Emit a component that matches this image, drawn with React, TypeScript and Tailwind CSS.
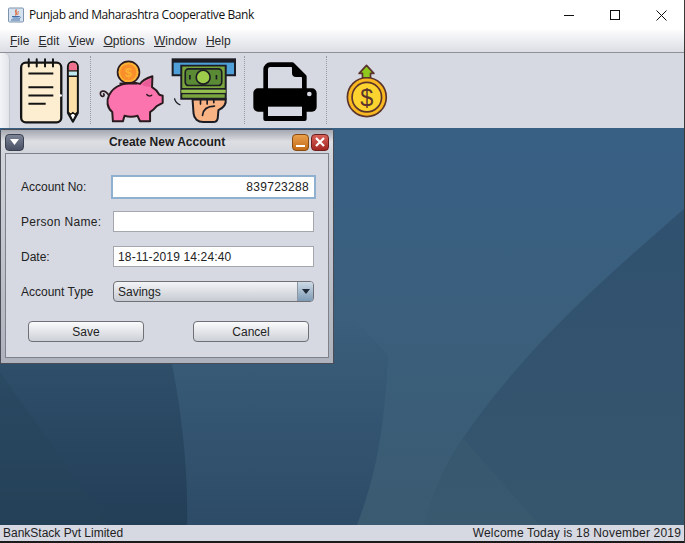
const sans = "font-['Liberation_Sans',Arial,sans-serif]";

const menus = ["File", "Edit", "View", "Options", "Window", "Help"];

const JavaIcon = () => (
  <svg width="16" height="16" viewBox="0 0 16 16" className="block">
    <rect x="0.5" y="1" width="15" height="14" rx="1" fill="#d5e2f0" stroke="#7f93ad" />
    <path d="M8.5 2.5C6 5 10 6 7.5 8.5" fill="none" stroke="#d9572b" strokeWidth="1.3" />
    <path d="M10.5 4C9 5.5 11 6 9.5 8" fill="none" stroke="#e0793f" strokeWidth="1" />
    <path d="M4 9.5h7M4.5 11h6M3 13h9" stroke="#3f6fa8" strokeWidth="1" />
    <path d="M11 9.5c2 0 2 2-.5 2" fill="none" stroke="#3f6fa8" strokeWidth="0.8" />
  </svg>
);

const WindowControls = () => (
  <div className="flex">
    <div className="w-[46px] h-[30px] flex items-center justify-center">
      <svg width="10" height="10" viewBox="0 0 10 10"><path d="M0 5.5h10" stroke="#111" /></svg>
    </div>
    <div className="w-[46px] h-[30px] flex items-center justify-center">
      <svg width="10" height="10" viewBox="0 0 10 10"><rect x="0.5" y="0.5" width="9" height="9" fill="none" stroke="#111" /></svg>
    </div>
    <div className="w-[46px] h-[30px] flex items-center justify-center">
      <svg width="11" height="11" viewBox="0 0 11 11"><path d="M0.5 0.5l10 10M10.5 0.5l-10 10" stroke="#111" /></svg>
    </div>
  </div>
);

const NotepadIcon = () => (
  <svg width="65" height="68" viewBox="50 15 195 205" className="block">
    <rect x="62" y="32" width="121" height="180" rx="14" fill="#fdeed2" stroke="#141414" strokeWidth="7" />
    <path d="M85 22v22M109 22v22M134 22v22M158 22v22" stroke="#141414" strokeWidth="6" strokeLinecap="round" />
    <path d="M84 65h75M84 106h75M84 131h75M84 156h52" stroke="#141414" strokeWidth="6" />
    <circle cx="181" cy="131" r="4" fill="#fff" />
    <path d="M203 44a15 15 0 0 1 30 0v140l-15 26-15-26z" fill="#fde0a8" stroke="#141414" strokeWidth="6" strokeLinejoin="round" />
    <path d="M206 44a12 12 0 0 1 24 0v12h-24z" fill="#ee6f8e" />
    <rect x="206" y="58" width="24" height="15" fill="#bfe8f2" />
    <path d="M204 57h28M204 73h28" stroke="#141414" strokeWidth="4" />
    <path d="M205 182l7 6 6-6 6 6 7-6-13 26z" fill="#fff" stroke="#141414" strokeWidth="4" strokeLinejoin="round" />
  </svg>
);

const PiggyIcon = () => (
  <svg width="68" height="67" viewBox="20 15 205 200" className="block">
    <path d="M56 130C44 110 26 116 31 128c4 8 14 4 9-3" fill="none" stroke="#2b1b1f" strokeWidth="5" strokeLinecap="round" />
    <circle cx="115" cy="60" r="33" fill="#fdb233" stroke="#2b1b1f" strokeWidth="5" />
    <path d="M115 36a24 24 0 0 1 0 48 24 24 0 0 1-14-44" fill="#f98f2b" />
    <text x="115" y="74" textAnchor="middle" fontSize="38" fontFamily="Liberation Sans" fontWeight="700" fill="#fdb233">$</text>
    <path d="M56 130C70 98 112 86 150 95C155 86 170 78 187 72L186 105C198 112 205 122 208 128L218 131L218 152L200 162C192 172 186 176 180 180L180 208L150 208L142 191C130 195 115 195 103 191L98 208L68 208L66 180C50 167 48 145 56 130Z" fill="#fb74ae" stroke="#2b1b1f" strokeWidth="6" strokeLinejoin="round" />
    <path d="M155 97c8-8 18-14 28-18l-1 24c-8 2-20 0-27-6z" fill="#e85c98" />
    <path d="M170 127c4 5 10 6 15 2" fill="none" stroke="#2b1b1f" strokeWidth="4" strokeLinecap="round" />
    <path d="M88 94h52" stroke="#2b1b1f" strokeWidth="6" />
  </svg>
);

const AtmIcon = () => (
  <svg width="68" height="67" viewBox="235 15 205 200" className="block">
    <rect x="246" y="21" width="188" height="48" fill="#4f9fd8" stroke="#1c1c24" strokeWidth="6" />
    <rect x="246" y="21" width="188" height="10" fill="#1c1c24" />
    <path d="M272 40h134v100H272z" fill="#7aa53e" stroke="#1c1c24" strokeWidth="6" />
    <path d="M272 110h134M272 124h134" stroke="#1c1c24" strokeWidth="5" />
    <rect x="272" y="113" width="134" height="9" fill="#96c050" />
    <rect x="284" y="50" width="110" height="50" rx="10" fill="#5b8a35" stroke="#1c1c24" strokeWidth="5" />
    <circle cx="338" cy="75" r="21" fill="#9ccc4a" stroke="#1c1c24" strokeWidth="5" />
    <path d="M298 68v14M378 68v14" stroke="#1c1c24" strokeWidth="5" />
    <path d="M252 140c2 8 8 14 16 18" fill="none" stroke="#1c1c24" strokeWidth="4" strokeLinecap="round" />
    <path d="M306 142h100c2 14-8 26-22 32l-2 24c-1 8-6 12-14 12h-30c-16 0-28-10-29-26z" fill="#f7b383" stroke="#1c1c24" strokeWidth="6" strokeLinejoin="round" />
    <path d="M336 190c2-18 12-28 36-28M330 142v14M350 142v14M370 142v10" fill="none" stroke="#1c1c24" strokeWidth="5" strokeLinecap="round" />
  </svg>
);

const PrinterIcon = () => (
  <svg width="70" height="65" viewBox="30 20 210 195" className="block">
    <path d="M77 115V51a14 14 0 0 1 14-14h66l36 36v42" fill="#d6d9e2" stroke="#000" strokeWidth="14" strokeLinejoin="round" />
    <path d="M156 40v22a12 12 0 0 0 12 12h26z" fill="#000" />
    <path d="M54 108h162a14 14 0 0 1 14 14v42a14 14 0 0 1-14 14H54a14 14 0 0 1-14-14v-42a14 14 0 0 1 14-14z" fill="#000" />
    <path d="M70 150h130v50a6 6 0 0 1-6 6H76a6 6 0 0 1-6-6z" fill="#000" />
    <rect x="84" y="163" width="102" height="28" fill="#d6d9e2" />
    <circle cx="208" cy="125" r="7" fill="#d6d9e2" />
  </svg>
);

const CoinIcon = () => (
  <svg width="47" height="57" viewBox="310 30 140 170" className="block">
    <path d="M380 40l22 24h-10v14h-24V64h-10z" fill="#8ec91d" stroke="#5b342c" strokeWidth="5" strokeLinejoin="round" />
    <circle cx="381" cy="135" r="58" fill="#f9b81f" stroke="#5b342c" strokeWidth="5" />
    <circle cx="381" cy="135" r="44" fill="#fdd42f" stroke="#5b342c" strokeWidth="5" />
    <text x="381" y="160" textAnchor="middle" fontSize="70" fontFamily="Liberation Sans" fill="#5b342c">$</text>
  </svg>
);

const Wallpaper = () => (
  <svg className="absolute inset-0 block" width="685" height="397" viewBox="0 128 685 397">
    <defs>
      <linearGradient id="base" x1="0" y1="0" x2="0" y2="1">
        <stop offset="0" stopColor="#386085" />
        <stop offset="0.55" stopColor="#3b5f7b" />
        <stop offset="1" stopColor="#3a5a70" />
      </linearGradient>
      <linearGradient id="mid" gradientUnits="userSpaceOnUse" x1="0" y1="322" x2="0" y2="525">
        <stop offset="0" stopColor="#3a5e7b" />
        <stop offset="1" stopColor="#2d4b66" />
      </linearGradient>
      <linearGradient id="left" x1="0" y1="0" x2="0" y2="1">
        <stop offset="0" stopColor="#2f4f6a" />
        <stop offset="1" stopColor="#233e57" />
      </linearGradient>
      <linearGradient id="wedge" x1="0" y1="0" x2="0" y2="1">
        <stop offset="0" stopColor="#30516f" />
        <stop offset="1" stopColor="#36566d" />
      </linearGradient>
    </defs>
    <rect x="0" y="128" width="685" height="397" fill="url(#base)" />
    <path d="M357 322L388 355C385 420 378 470 357 525L0 525L0 322Z" fill="url(#mid)" />
    <path d="M170 355C184 420 188 480 187 525L0 525L0 355Z" fill="url(#left)" />
    <path d="M0 372L108 525L0 525Z" fill="#24455a" opacity="0.35" />
    <path d="M685 208C620 265 530 340 463 438C445 465 432 495 425 525L685 525Z" fill="url(#wedge)" />
    <path d="M463 438L540 525L425 525C432 495 445 465 463 438Z" fill="#3a5b70" opacity="0.5" />
  </svg>
);

const ToolSeparator = () => <div className="w-px h-[68px] mt-[3px] border-l border-dotted border-[#9a9ca3]" />;

const Field = ({ label, className, children }: { label: string; className: string; children: React.ReactNode }) => (
  <div className={`flex items-center ${className}`}>
    <span className="w-[92px] text-[12px] leading-none text-[#222]">{label}</span>
    {children}
  </div>
);

const ActionButton = ({ label }: { label: string }) => (
  <div className="w-[116px] h-[21px] flex items-center justify-center rounded-[4px] border border-[#6f7177] bg-gradient-to-b from-[#fbfbfc] to-[#cdd0d7] text-[12px] text-[#222]">
    {label}
  </div>
);

const CreateAccountFrame = () => (
  <div className="absolute left-0 top-[1px] w-[334px] h-[235px] flex flex-col rounded-t-[3px] border border-[#4a4d55] bg-gradient-to-b from-[#d6d8de] to-[#aeb2bc]">
    <div className="h-[23px] flex items-center px-[4px] pt-[1px] bg-gradient-to-b from-[#a5a8b1] via-[#dcdee3] to-[#d2d5dc]">
      <div className="w-[19px] h-[17px] flex items-center justify-center rounded-[4px] border border-[#3b4150] bg-gradient-to-b from-[#7c8496] to-[#4a5165]">
        <svg width="9" height="6" viewBox="0 0 9 6"><path d="M0 0h9L4.5 6z" fill="#fff" /></svg>
      </div>
      <span className="flex-1 text-center text-[12px] font-bold text-[#1c1c1c] pl-[18px]">Create New Account</span>
      <div className="flex gap-[2px]">
        <div className="w-[17px] h-[17px] flex items-end justify-center pb-[3px] rounded-[4px] border border-[#8a4b10] bg-gradient-to-b from-[#e9a04a] to-[#c36a12]">
          <div className="w-[9px] h-[2px] bg-white" />
        </div>
        <div className="w-[18px] h-[17px] flex items-center justify-center rounded-[4px] border border-[#6e1c1c] bg-gradient-to-b from-[#d8625a] to-[#a42420]">
          <svg width="10" height="10" viewBox="0 0 10 10"><path d="M1 1l8 8M9 1l-8 8" stroke="#fff" strokeWidth="2.2" /></svg>
        </div>
      </div>
    </div>
    <div className="mx-[4px] h-[205px] pl-[15px] border border-[#7e8189] bg-[#d6d9e2]">
      <Field label="Account No:" className="mt-[23px]">
        <div className="w-[201px] h-[20px] flex items-center justify-end pr-[5px] bg-white outline outline-2 outline-[#8fb0cf] text-[12px] tracking-[0.3px] text-[#222]">
          839723288
        </div>
      </Field>
      <Field label="Person Name:" className="mt-[14px] tracking-[0.3px]">
        <div className="w-[201px] h-[21px] bg-white border border-[#a4a7ae]" />
      </Field>
      <Field label="Date:" className="mt-[14px]">
        <div className="w-[201px] h-[21px] flex items-center pl-[4px] bg-white border border-[#a4a7ae] text-[12px] tracking-[0.15px] text-[#222]">
          18-11-2019 14:24:40
        </div>
      </Field>
      <Field label="Account Type" className="mt-[14px]">
        <div className="w-[201px] h-[21px] flex items-center rounded-[4px] border border-[#6f7177] bg-gradient-to-b from-[#f3f4f6] to-[#c7cbd2] overflow-hidden">
          <span className="flex-1 pl-[4px] text-[12px] text-[#222]">Savings</span>
          <div className="w-[16px] h-full flex items-center justify-center border-l border-[#8c96a3] bg-gradient-to-b from-[#cfdbe6] to-[#7e9bb5]">
            <svg width="8" height="5" viewBox="0 0 8 5"><path d="M0 0h8L4 5z" fill="#1f2a36" /></svg>
          </div>
        </div>
      </Field>
      <div className="flex mt-[19px] pl-[7px] gap-[49px]">
        <ActionButton label="Save" />
        <ActionButton label="Cancel" />
      </div>
    </div>
  </div>
);

export default function App() {
  return (
    <div className={`w-[685px] h-[543px] flex flex-col overflow-hidden bg-[#1c1c1c] border-r border-[#3a3a3a] ${sans}`}>
      <div className="h-[30px] shrink-0 flex items-center bg-white">
        <div className="ml-[8px]"><JavaIcon /></div>
        <span className="ml-[5px] flex-1 font-['Open_Sans',sans-serif] text-[12px] tracking-[-0.4px] text-[#111]">
          Punjab and Maharashtra Cooperative Bank
        </span>
        <WindowControls />
      </div>

      <div className="h-[23px] shrink-0 flex items-center gap-[9.2px] pl-[10px] border-b border-[#8f9198] bg-gradient-to-b from-[#fcfcfd] to-[#dcdee5] text-[12px] text-[#2a2a2a]">
        {menus.map((menu) => (
          <span key={menu}>
            <span className="underline">{menu[0]}</span>
            {menu.slice(1)}
          </span>
        ))}
      </div>

      <div className="h-[75px] shrink-0 flex items-start bg-[#d6d9e2]">
        <div className="w-[10px] h-full rounded-tr-[6px] border-r border-[#c2c5cd] bg-gradient-to-r from-[#f3f4f7] to-[#e2e4ea]" />
        <div className="w-[80px] pl-[7px] pt-[4px]"><NotepadIcon /></div>
        <ToolSeparator />
        <div className="w-[153px] flex pl-[6px] pt-[4px]">
          <PiggyIcon />
          <div className="ml-[4px]"><AtmIcon /></div>
        </div>
        <ToolSeparator />
        <div className="w-[81px] pl-[5px] pt-[6px]"><PrinterIcon /></div>
        <ToolSeparator />
        <div className="pl-[16px] pt-[9px]"><CoinIcon /></div>
      </div>

      <div className="relative h-[397px] shrink-0">
        <Wallpaper />
        <CreateAccountFrame />
      </div>

      <div className="h-[16px] shrink-0 flex items-center justify-between px-[3px] bg-[#d6d9e2] text-[12px] text-[#222]">
        <span>BankStack Pvt Limited</span>
        <span className="tracking-[0.18px]">Welcome Today is 18 November 2019</span>
      </div>
    </div>
  );
}
